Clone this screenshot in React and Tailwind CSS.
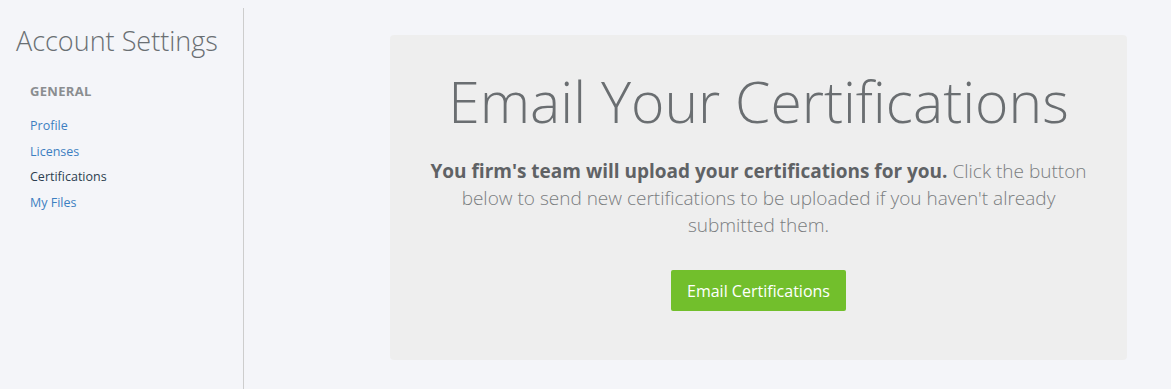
import React from "react";

const links = [
  { label: "Profile", active: false },
  { label: "Licenses", active: false },
  { label: "Certifications", active: true },
  { label: "My Files", active: false },
];

export default function App() {
  return (
    <div
      className="flex h-[389px] w-full bg-[#f4f5f9]"
      style={{ fontFamily: '"Open Sans", sans-serif' }}
    >
      <aside className="mt-2 w-[244px] shrink-0 border-r border-[#cdcdcd] pl-[16px]">
        <h2 className="mt-[15px] text-[27px] font-light leading-[36px] text-[#6a6f73]">
          Account Settings
        </h2>
        <div className="mt-[22px] pl-[14px]">
          <p className="text-[13px] leading-[20px] font-bold tracking-wide text-[#8a8d90]">GENERAL</p>
          <ul className="mt-[16px] flex flex-col">
            {links.map((l) => (
              <li key={l.label} className="h-[25.5px] text-[12.5px] leading-[18px]">
                <a
                  href="#"
                  className={l.active ? "text-[#2c3e50]" : "text-[#3d7fc1]"}
                >
                  {l.label}
                </a>
              </li>
            ))}
          </ul>
        </div>
      </aside>

      <main className="flex-1 pl-[146px] pr-[44px] pt-[35px]">
        <div className="flex h-[325px] flex-col items-center rounded-[4px] bg-[#eeeeee] pt-[34px]">
          <h1 className="text-[57px] font-light leading-[64px] text-[#6a6e71]">
            Email Your Certifications
          </h1>
          <p className="mt-[25px] max-w-[662px] text-center text-[19px] font-light leading-[27px] text-[#7a7d80]">
            <span className="font-bold text-[#5f6265]">
              You firm's team will upload your certifications for you.
            </span>{" "}
            Click the button below to send new certifications to be uploaded if you haven't
            already submitted them.
          </p>
          <button className="mt-[31px] h-[41px] w-[175px] rounded-[2px] bg-[#72bf2c] text-[16px] text-white">
            Email Certifications
          </button>
        </div>
      </main>
    </div>
  );
}
